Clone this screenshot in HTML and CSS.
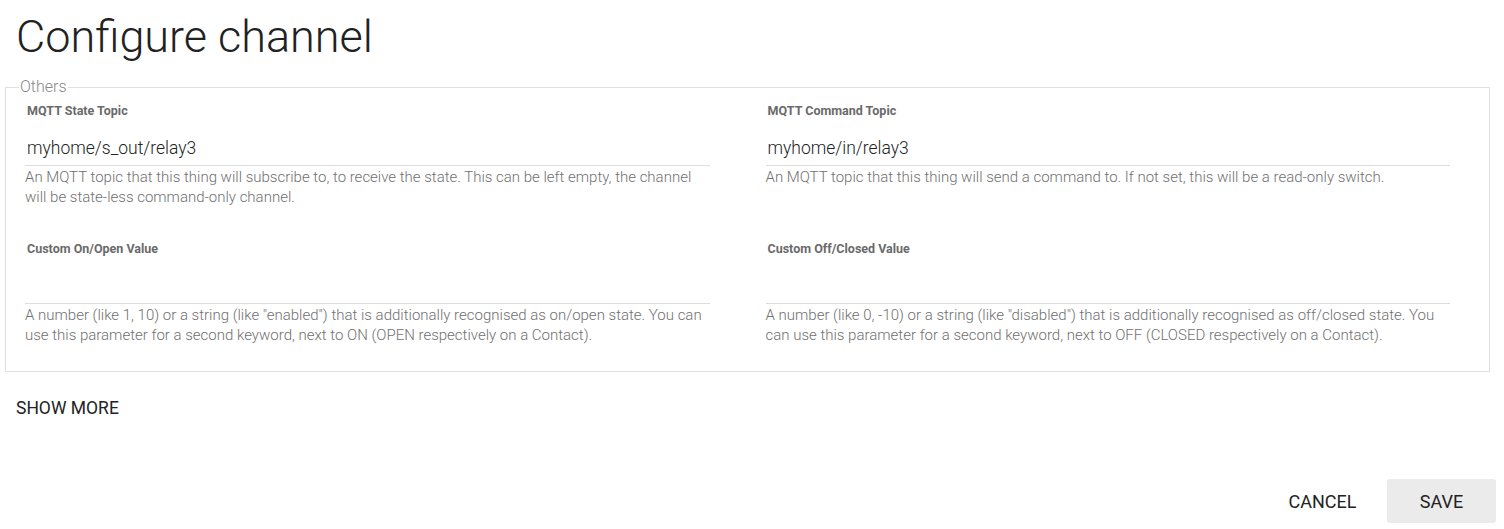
FILE: index.html
```html
<!DOCTYPE html>
<html lang="en">
<head>
    <meta charset="UTF-8">
    <title>Configure channel</title>
    <link rel="stylesheet" href="styles.css">
</head>
<body>
    <h1 class="title">Configure channel</h1>
    <fieldset class="group">
        <legend>Others</legend>
        <div class="grid">
            <div class="field">
                <label>MQTT State Topic</label>
                <div class="input">myhome/s_out/relay3</div>
                <p class="desc">An MQTT topic that this thing will subscribe to, to receive the state. This can be left empty, the channel will be state-less command-only channel.</p>
            </div>
            <div class="field">
                <label>MQTT Command Topic</label>
                <div class="input">myhome/in/relay3</div>
                <p class="desc">An MQTT topic that this thing will send a command to. If not set, this will be a read-only switch.</p>
            </div>
            <div class="field">
                <label>Custom On/Open Value</label>
                <div class="input"></div>
                <p class="desc">A number (like 1, 10) or a string (like "enabled") that is additionally recognised as on/open state. You can use this parameter for a second keyword, next to ON (OPEN respectively on a Contact).</p>
            </div>
            <div class="field">
                <label>Custom Off/Closed Value</label>
                <div class="input"></div>
                <p class="desc">A number (like 0, -10) or a string (like "disabled") that is additionally recognised as off/closed state. You can use this parameter for a second keyword, next to OFF (CLOSED respectively on a Contact).</p>
            </div>
        </div>
    </fieldset>
    <div class="show-more">Show more</div>
    <div class="actions">
        <button class="btn">Cancel</button>
        <button class="btn btn-save">Save</button>
    </div>
</body>
</html>
```

FILE: styles.css
```css
* {
    margin: 0;
    padding: 0;
    box-sizing: border-box;
}
body {
    font-family: Roboto, 'Liberation Sans', sans-serif;
    background: #fff;
    color: #222;
}
.title {
    font-size: 45px;
    font-weight: 300;
    line-height: 52px;
    color: #222;
    margin-top: 11px;
    padding-left: 16px;
}
.group {
    margin: 16px 14px 0 5px;
    border: 1px solid #e0e0e0;
    padding: 8px 39px 26px 19px;
}
.group legend {
    font-size: 16px;
    line-height: 16px;
    color: #888;
    font-weight: 300;
    margin-left: -6px;
    padding: 0 1px;
}
.grid {
    display: grid;
    grid-template-columns: 1fr 1fr;
    column-gap: 56px;
    row-gap: 34px;
}
.field label {
    display: block;
    font-size: 12.5px;
    line-height: 15px;
    font-weight: 700;
    color: #6a6a6a;
    padding-left: 2px;
}
.input {
    font-size: 17.5px;
    line-height: 20px;
    font-weight: 300;
    height: 48px;
    padding: 20px 0 8px 2px;
    color: #222;
    border-bottom: 1px solid #ddd;
}
.desc {
    font-size: 15px;
    line-height: 20px;
    font-weight: 300;
    color: #707070;
    margin-top: 1px;
}
.show-more {
    font-size: 17.5px;
    line-height: 20px;
    text-transform: uppercase;
    color: #222;
    margin: 26px 0 0 16px;
}
.actions {
    display: flex;
    justify-content: flex-end;
    gap: 10px;
    margin-top: 61px;
    padding-right: 8px;
}
.btn {
    font-family: Roboto, 'Liberation Sans', sans-serif;
    font-size: 18px;
    text-transform: uppercase;
    color: #222;
    background: none;
    border: none;
    border-radius: 3px;
    min-width: 109px;
    height: 44px;
    padding: 0 20px;
    cursor: pointer;
}
.btn-save {
    background: #ebebeb;
}
```
